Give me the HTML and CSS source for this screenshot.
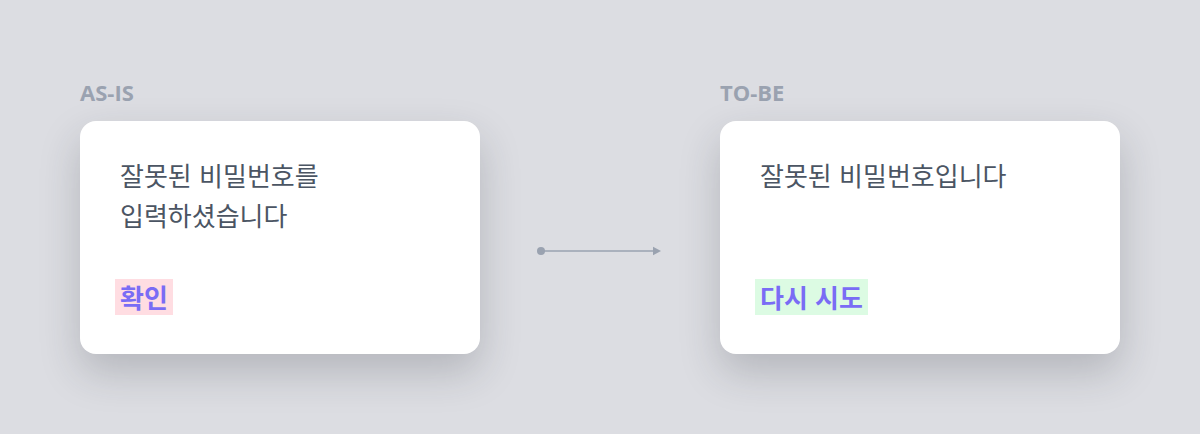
FILE: index.html
```html
<!DOCTYPE html>
<html lang="ko">
<head>
<meta charset="utf-8">
<link rel="stylesheet" href="styles.css">
</head>
<body>
<div class="stage">
  <section class="col">
    <div class="label">AS-IS</div>
    <div class="card">
      <p class="msg">잘못된 비밀번호를<br>입력하셨습니다</p>
      <span class="btn btn-bad">확인</span>
    </div>
  </section>
  <div class="arrow">
    <svg width="126" height="12" viewBox="0 0 126 12">
      <circle cx="4" cy="6" r="4" fill="#9aa2b0"/>
      <line x1="4" y1="6" x2="117" y2="6" stroke="#9aa2b0" stroke-width="1.5"/>
      <path d="M116 1.8 L124 6 L116 10.2 Z" fill="#9aa2b0"/>
    </svg>
  </div>
  <section class="col">
    <div class="label">TO-BE</div>
    <div class="card">
      <p class="msg">잘못된 비밀번호입니다</p>
      <span class="btn btn-good">다시 시도</span>
    </div>
  </section>
</div>
</body>
</html>
```
FILE: styles.css
```css
* { box-sizing: border-box; }
html, body { margin: 0; padding: 0; }
body {
  width: 1200px;
  height: 434px;
  background: #dcdde2;
  font-family: "Noto Sans CJK KR", "Noto Sans", sans-serif;
  overflow: hidden;
}
.stage {
  display: flex;
  align-items: flex-start;
  padding: 77px 0 0 80px;
}
.col {
  display: flex;
  flex-direction: column;
  gap: 14px;
  width: 400px;
}
.label {
  font-family: "Open Sans", "Noto Sans", sans-serif;
  font-weight: 700;
  font-size: 22px;
  line-height: 30px;
  color: #9aa2b0;
}
.card {
  height: 233px;
  background: #ffffff;
  border-radius: 16px;
  box-shadow: 0 18px 40px rgba(40, 44, 56, 0.22);
  padding: 34px 40px 39px 40px;
  display: flex;
  flex-direction: column;
  align-items: flex-start;
}
.msg {
  margin: 0;
  font-size: 26px;
  line-height: 40px;
  color: #4b5563;
  font-weight: 400;
}
.btn {
  margin-top: auto;
  margin-left: -5px;
  padding: 0 5px;
  height: 36px;
  font-size: 26px;
  line-height: 36px;
  font-weight: 700;
  color: #7a6cf5;
}
.btn-bad { background: #ffdde2; }
.btn-good { background: #dcfbe3; }
.arrow {
  width: 240px;
  display: flex;
  justify-content: center;
  padding-top: 168px;
  padding-left: 0;
}
.arrow svg { display: block; }
```
